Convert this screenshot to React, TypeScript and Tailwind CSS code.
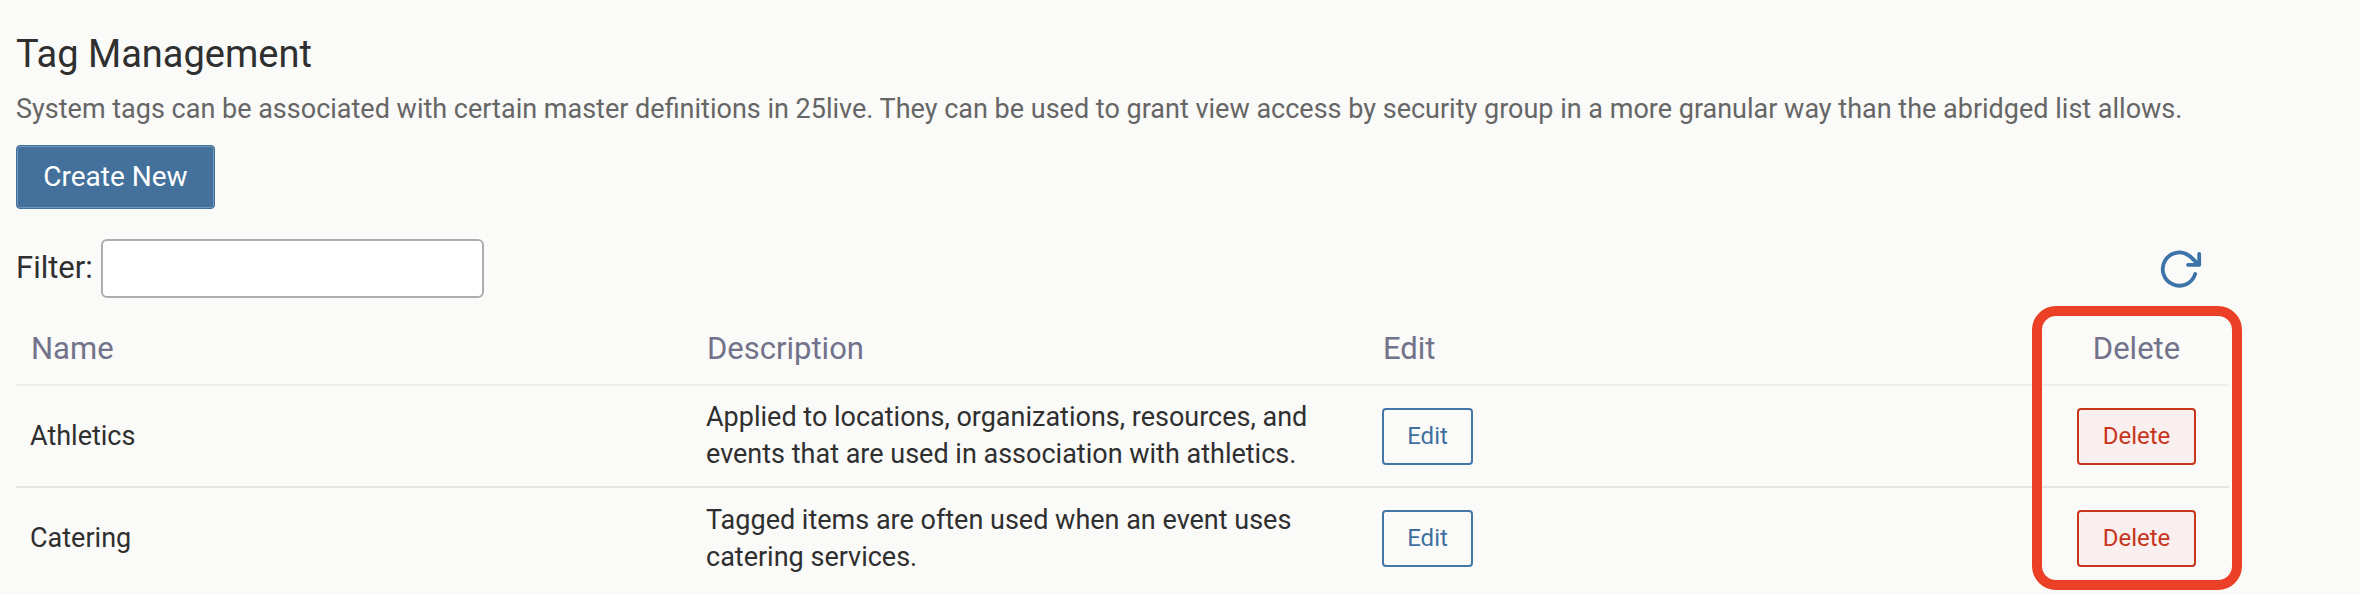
const tags = [
  {
    name: "Athletics",
    description:
      "Applied to locations, organizations, resources, and events that are used in association with athletics.",
  },
  { name: "Catering", description: "Tagged items are often used when an event uses catering services." },
];

function RefreshIcon() {
  return (
    <svg
      className="h-[38px] w-[42px]"
      viewBox="0 0 42 38"
      fill="none"
      stroke="currentColor"
      strokeWidth="3.8"
      strokeLinecap="round"
      strokeLinejoin="round"
      aria-hidden="true"
    >
      <path d="M35.2 24A16.6 16.6 0 1 1 29 5.6Q31 7 38.5 14.5" />
      <path d="M39.2 4v10.8H28" />
    </svg>
  );
}

export default function App() {
  return (
    <main className="min-h-screen bg-[#fafaf8] pt-8 pr-[131px] pl-4 font-[Roboto,sans-serif] text-[#2f2f2f]">
      <h1 className="text-[38px] leading-[44px]">Tag Management</h1>
      <p className="mt-3 text-[27px] leading-[42px] text-[#666]">
        System tags can be associated with certain master definitions in 25live. They can be used to grant view access by
        security group in a more granular way than the abridged list allows.
      </p>
      <button
        type="button"
        className="mt-[15px] block h-16 w-[199px] rounded-sm border border-[#43719c] bg-[#43719c] text-[28px] text-white inset-ring inset-ring-[#7197ba]"
      >
        Create New
      </button>
      <div className="mt-[30px] flex items-center justify-between pr-[27px]">
        <div className="flex items-center gap-2">
          <label htmlFor="filter" className="text-[31px]">
            Filter:
          </label>
          <input
            id="filter"
            type="text"
            className="h-[59px] w-[383px] rounded-md border-2 border-[#adadad] bg-white px-3 text-[27px]"
          />
        </div>
        <button type="button" aria-label="Refresh" className="text-[#3c73a8]">
          <RefreshIcon />
        </button>
      </div>
      <div className="relative mt-3">
        <table className="w-full table-fixed border-collapse text-left">
          <colgroup>
            <col />
            <col />
            <col />
            <col className="w-[185px]" />
          </colgroup>
          <thead>
            <tr className="h-[75px] border-b-2 border-[#efefed] text-[31px] text-[#72728a]">
              <th className="px-[15px] pt-1 font-normal">Name</th>
              <th className="px-[15px] pt-1 font-normal">Description</th>
              <th className="px-[15px] pt-1 font-normal">Edit</th>
              <th className="pt-1 text-center font-normal">Delete</th>
            </tr>
          </thead>
          <tbody className="text-[27px] leading-[37px]">
            {tags.map((tag) => (
              <tr key={tag.name} className="h-[102px] border-b-2 border-[#e3e3e1] last:border-b-0">
                <td className="px-3.5">{tag.name}</td>
                <td className="px-3.5">{tag.description}</td>
                <td className="px-3.5">
                  <button
                    type="button"
                    className="block h-[57px] w-[91px] rounded-sm border-2 border-[#4576a8] text-[24px] text-[#3f709f]"
                  >
                    Edit
                  </button>
                </td>
                <td>
                  <button
                    type="button"
                    className="mx-auto block h-[57px] w-[119px] rounded-sm border-2 border-[#c7351d] bg-[#f9efee] text-[24px] text-[#c7351d]"
                  >
                    Delete
                  </button>
                </td>
              </tr>
            ))}
          </tbody>
        </table>
        <div className="pointer-events-none absolute -top-1 -right-[13px] -bottom-px w-[210px] rounded-3xl border-10 border-[#eb4025]" />
      </div>
    </main>
  );
}
